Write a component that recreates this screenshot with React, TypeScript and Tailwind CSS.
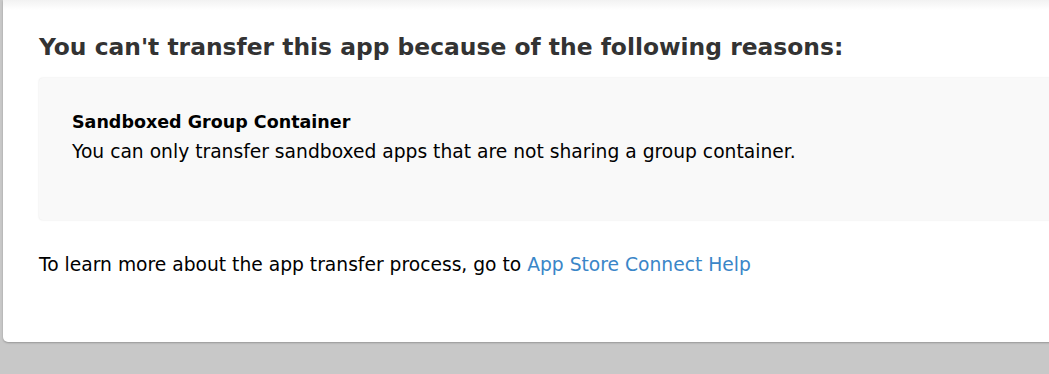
export default function App() {
  return (
    <div className="w-[1049px] h-[374px] bg-[#c8c8c8] overflow-hidden pl-[3px]" style={{ fontFamily: '"DejaVu Sans", Verdana, sans-serif' }}>
      <div className="relative w-[1060px] h-[342px] bg-white rounded-bl-[5px] shadow-[0_1px_2px_rgba(0,0,0,0.25)] pl-[36px] pt-[31px]">
        <div className="absolute left-0 right-0 top-0 h-[10px] bg-gradient-to-b from-[#f2f2f2] to-white" />
        <h1 className="relative text-[23.4px] leading-[32px] font-bold text-[#333333]">
          You can't transfer this app because of the following reasons:
        </h1>
        <div className="mt-[15px] h-[142px] bg-[#f9f9f9] rounded-[4px] shadow-[0_0_2px_rgba(0,0,0,0.12)] pl-[33px] pt-[32px]">
          <div className="text-[17.5px] leading-[24px] font-bold text-black">Sandboxed Group Container</div>
          <div className="mt-[6px] text-[18.7px] leading-[24px] text-black">
            You can only transfer sandboxed apps that are not sharing a group container.
          </div>
        </div>
        <p className="mt-[33px] text-[18.7px] leading-[24px] text-black">
          To learn more about the app transfer process, go to{" "}
          <a className="text-[#3a86c8]">App Store Connect Help</a>
        </p>
      </div>
    </div>
  );
}
